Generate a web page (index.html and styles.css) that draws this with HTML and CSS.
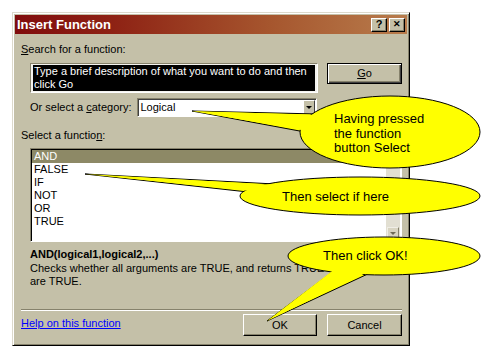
FILE: index.html
```html
<!DOCTYPE html>
<html lang="en">
<head>
  <meta charset="UTF-8">
  <title>Insert Function</title>
<link rel="stylesheet" href="styles.css">
</head>
<body>
  <div class="dialog">
    <div class="titlebar">
      <span class="title">Insert Function</span>
      <span class="tbtn">?</span>
      <span class="tbtn close">&#x2715;</span>
    </div>

    <div class="panel">
      <div class="label"><u>S</u>earch for a function:</div>
      <div class="search-row">
        <div class="searchbox">
          <div class="searchtext">Type a brief description of what you want to do and then<br>click Go</div>
        </div>
        <div class="btn default"><span><u>G</u>o</span></div>
      </div>

      <div class="cat-row">
        <span>Or select a <u>c</u>ategory:</span>
        <div class="select">
          <span class="value">Logical</span>
          <span class="drop"><span class="tri"></span></span>
        </div>
      </div>

      <div class="label">Select a functio<u>n</u>:</div>
      <div class="list">
        <div class="items">
          <div class="item selected">AND</div>
          <div class="item">FALSE</div>
          <div class="item">IF</div>
          <div class="item">NOT</div>
          <div class="item">OR</div>
          <div class="item">TRUE</div>
        </div>
        <div class="scrollbar">
          <span class="sbtn"><span class="tri small"></span></span>
        </div>
      </div>

      <div class="syntax">AND(logical1,logical2,...)</div>
      <div class="desc">Checks whether all arguments are TRUE, and returns TRUE if all arguments<br>are TRUE.</div>

      <div class="sep"></div>

      <div class="footer">
        <a class="help" href="#">Help on this function</a>
        <div class="btn ok">OK</div>
        <div class="btn cancel">Cancel</div>
      </div>
    </div>
  </div>

  <!-- callouts drawn over the dialog -->
  <svg class="callouts" width="488" height="354" viewBox="0 0 488 354">
    <g class="bubble">
      <polygon points="192,111 318,114 305,132"/>
      <ellipse cx="390" cy="132" rx="90" ry="36"/>
      <polygon class="cover" points="192,111 320,115 307,131"/>
    </g>
    <text x="334" y="123">Having pressed</text>
    <text x="334" y="138">the function</text>
    <text x="334" y="152">button Select</text>

    <g class="bubble">
      <polygon points="85,174 275,184 248,192"/>
      <ellipse cx="360" cy="196" rx="120" ry="19"/>
      <polygon class="cover" points="85,174 278,185 250,191"/>
    </g>
    <text x="282" y="201">Then select if here</text>

    <g class="bubble">
      <polygon points="267,321 335,270 372,272"/>
      <ellipse cx="384" cy="256" rx="96" ry="19"/>
      <polygon class="cover" points="267,321 336,268 372,270"/>
    </g>
    <text x="323" y="260">Then click OK!</text>
  </svg>
</body>
</html>
```

FILE: styles.css
```css
/* Page */
body {
  margin: 0;
  background: #fff;
  font-family: "Liberation Sans", Arial, sans-serif;
  font-size: 11px;
  line-height: 13px;
  color: #000;
}

u {
  text-decoration: underline;
  text-underline-offset: 1px;
}

/* Dialog frame */
.dialog {
  margin: 12px 0 0 12px;
  width: 398px;
  height: 334px;
  box-sizing: border-box;
  padding: 2px;
  background: #c4c0a8;
  border: 1px solid;
  border-color: #dcd9cc #000 #000 #dcd9cc;
  box-shadow: inset 1px 1px #fff, inset -1px -1px #86826c;
}

.titlebar {
  height: 19px;
  display: flex;
  align-items: center;
  gap: 2px;
  padding: 0 2px;
  background: linear-gradient(to right, #800c0c, #8e2214 25%, #a6562e 65%, #b87c4c);
  color: #fff;
}

.title {
  flex: 1;
  font-weight: bold;
  font-size: 13px;
}

.tbtn {
  width: 16px;
  height: 14px;
  box-sizing: border-box;
  display: flex;
  align-items: center;
  justify-content: center;
  background: #c4c0a8;
  border: 1px solid;
  border-color: #fff #000 #000 #fff;
  box-shadow: inset -1px -1px #86826c;
  color: #000;
  font-weight: bold;
  font-size: 11px;
}

.tbtn.close {
  font-size: 9px;
}

/* Panel content */
.panel {
  padding: 9px 5px 0 6px;
}

.search-row {
  margin-top: 7px;
  padding-left: 9px;
  display: flex;
  gap: 9px;
}

.searchbox {
  width: 288px;
  height: 30px;
  box-sizing: border-box;
  padding: 1px 2px 1px 2px;
  background: #f4f3ee;
  border: 1px solid;
  border-color: #86826c #fff #fff #86826c;
}

.searchtext {
  height: 100%;
  background: #000;
  color: #fff;
  padding-left: 1px;
}

.btn {
  box-sizing: border-box;
  display: flex;
  align-items: center;
  justify-content: center;
  background: #c4c0a8;
  border: 1px solid;
  border-color: #fff #000 #000 #fff;
  box-shadow: inset -1px -1px #86826c;
}

.btn.default {
  width: 75px;
  height: 21px;
  border-color: #000;
  box-shadow: inset 1px 1px #fff, inset -1px -1px #404040, inset -2px -2px #86826c;
}

.cat-row {
  margin-top: 5px;
  padding-left: 9px;
  display: flex;
  align-items: center;
  gap: 5px;
}

.select {
  width: 180px;
  height: 19px;
  box-sizing: border-box;
  display: flex;
  align-items: center;
  background: #fff;
  border: 1px solid;
  border-color: #86826c #fff #fff #86826c;
  box-shadow: inset 1px 1px #404040;
}

.select .value {
  flex: 1;
  padding-left: 3px;
}

.drop {
  width: 12px;
  height: 15px;
  margin-right: 1px;
  box-sizing: border-box;
  display: flex;
  align-items: center;
  justify-content: center;
  background: #c4c0a8;
  border: 1px solid;
  border-color: #fff #404040 #404040 #fff;
}

.tri {
  width: 0;
  height: 0;
  border-left: 3px solid transparent;
  border-right: 3px solid transparent;
  border-top: 3px solid #000;
}

.tri.small {
  border-top-color: #6e6a56;
}

.label {
  margin-top: 0;
}

.label + .list {
  margin-top: 6px;
}

.cat-row + .label {
  margin-top: 12px;
}

/* Function list */
.list {
  margin-left: 9px;
  width: 372px;
  height: 94px;
  box-sizing: border-box;
  display: flex;
  background: #fff;
  border: 1px solid;
  border-color: #86826c #fff #fff #86826c;
  box-shadow: inset 1px 1px #000;
  padding: 1px 1px 0 1px;
}

.items {
  flex: 1;
}

.item {
  height: 13px;
  padding-left: 2px;
}

.item.selected {
  background: #8d8966;
  color: #fff;
}

.scrollbar {
  width: 14px;
  display: flex;
  flex-direction: column;
  justify-content: flex-end;
  background: #e2dfd2;
}

.sbtn {
  height: 13px;
  box-sizing: border-box;
  display: flex;
  align-items: center;
  justify-content: center;
  background: #d8d4c2;
  border: 1px solid;
  border-color: #f0eee6 #86826c #86826c #f0eee6;
  margin: 0 1px 1px 1px;
}

.syntax {
  margin-top: 6px;
  padding-left: 9px;
  font-weight: bold;
}

.desc {
  margin-top: 1px;
  padding-left: 9px;
}

.sep {
  margin-top: 21px;
  border-top: 1px solid #86826c;
  border-bottom: 1px solid #fff;
}

.footer {
  margin-top: 3px;
  display: flex;
  gap: 10px;
}

.help {
  flex: 1;
  margin-top: 3px;
  color: #00f;
  text-decoration: underline;
}

.btn.ok {
  width: 74px;
  height: 22px;
}

.btn.cancel {
  width: 75px;
  height: 22px;
}

/* Callouts */
.callouts {
  position: absolute;
  top: 0;
  left: 0;
  pointer-events: none;
}

.bubble polygon,
.bubble ellipse {
  fill: #ffff00;
  stroke: #000;
  stroke-width: 1;
}

.bubble polygon.cover {
  stroke: none;
}

.callouts text {
  font-family: "Liberation Sans", Arial, sans-serif;
  font-size: 13px;
  fill: #000;
}
```
